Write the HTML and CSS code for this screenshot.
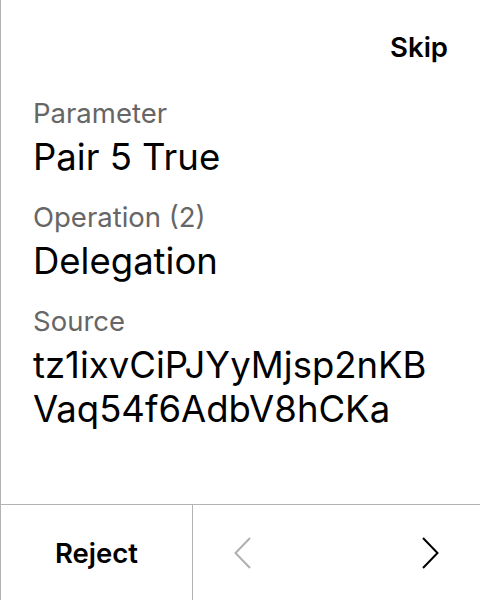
FILE: index.html
```html
<!DOCTYPE html>
<html>
<head>
<meta charset="utf-8">
<link rel="stylesheet" href="styles.css">
</head>
<body>
<div class="screen">
  <header class="top">
    <span class="skip">Skip</span>
  </header>
  <main class="content">
    <div class="field">
      <div class="label">Parameter</div>
      <div class="value">Pair 5 True</div>
    </div>
    <div class="field">
      <div class="label">Operation (2)</div>
      <div class="value">Delegation</div>
    </div>
    <div class="field">
      <div class="label">Source</div>
      <div class="value addr">tz1ixvCiPJYyMjsp2nKB<br>Vaq54f6AdbV8hCKa</div>
    </div>
  </main>
  <footer class="bottom">
    <div class="reject">Reject</div>
    <div class="nav">
      <svg class="chev prev" width="18" height="32" viewBox="0 0 18 32"><polyline points="16,1 1.5,16 16,31" fill="none" stroke="currentColor" stroke-width="2"/></svg>
      <svg class="chev next" width="18" height="32" viewBox="0 0 18 32"><polyline points="2,1 16.5,16 2,31" fill="none" stroke="currentColor" stroke-width="2"/></svg>
    </div>
  </footer>
</div>
</body>
</html>
```
FILE: styles.css
```css
html, body { margin: 0; padding: 0; background: #fff; }
body { font-family: Inter, "Noto Sans", sans-serif; color: #000; }
.screen {
  width: 480px; height: 600px; box-sizing: border-box;
  border-left: 1px solid #b3b3b3;
  display: flex; flex-direction: column;
}
.top { height: 96px; flex: none; display: flex; justify-content: flex-end; align-items: flex-start; padding: 30px 32px 0 0; box-sizing: border-box; }
.skip { font-size: 27.5px; font-weight: 600; line-height: 34px; }
.content { flex: 1; padding-left: 32px; display: flex; flex-direction: column; gap: 21px; }
.field { display: flex; flex-direction: column; gap: 5px; }
.label { font-size: 27.5px; color: #666; line-height: 34px; }
.value { font-size: 36.5px; line-height: 44px; }
.bottom { height: 96px; flex: none; border-top: 1px solid #b3b3b3; display: flex; box-sizing: border-box; }
.reject { width: 192px; border-right: 1px solid #b3b3b3; display: flex; align-items: center; justify-content: center; font-size: 27.5px; font-weight: 600; box-sizing: border-box; }
.nav { flex: 1; display: flex; align-items: center; justify-content: space-between; padding: 0 41px; }
.chev { display: block; }
.chev.prev { color: #b0b0b0; }
.chev.next { color: #000; }
```
